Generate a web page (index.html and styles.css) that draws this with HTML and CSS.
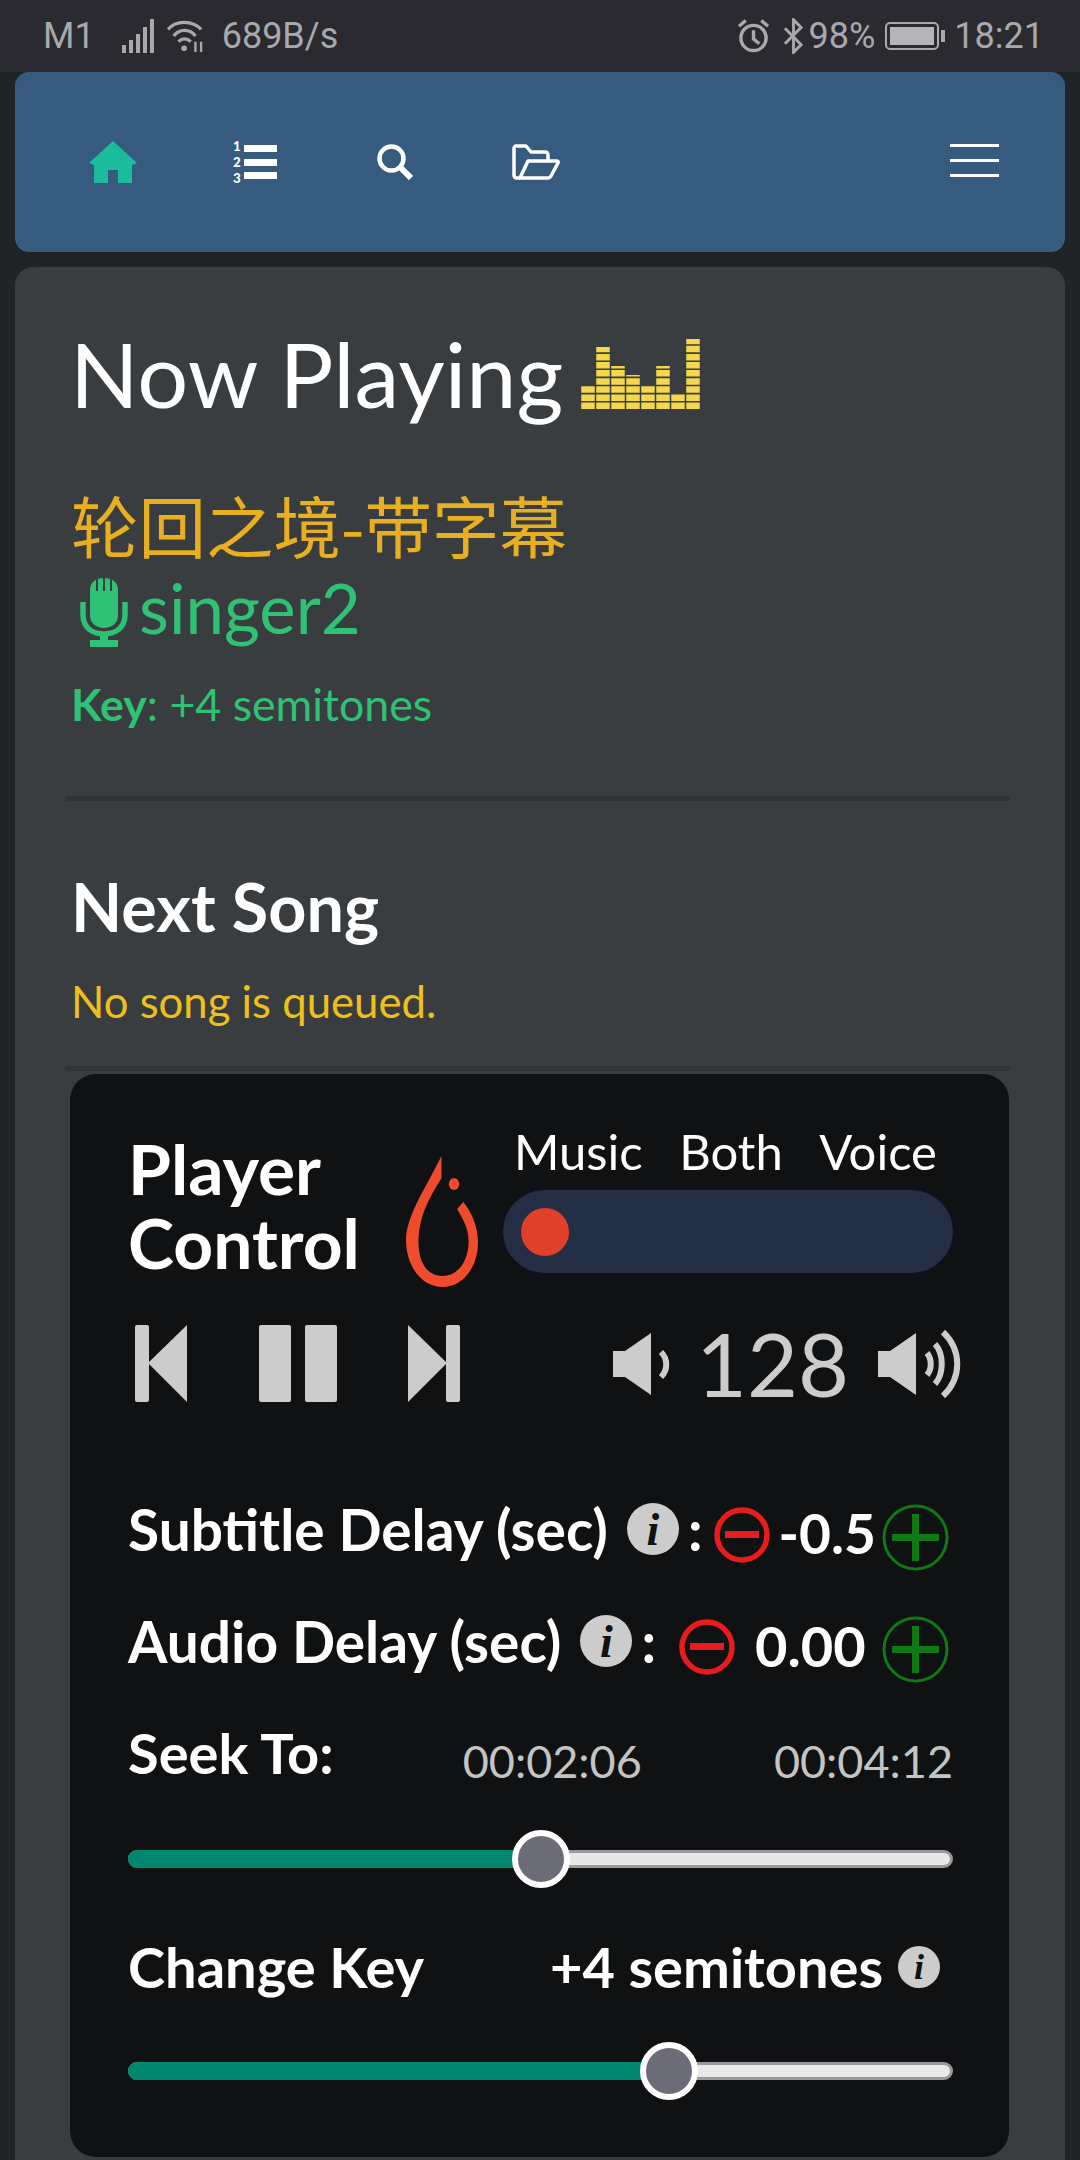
FILE: index.html
```html
<!DOCTYPE html>
<html lang="zh">
<head>
  <meta charset="UTF-8">
  <meta name="viewport" content="width=device-width, initial-scale=1.0">
  <title>Now Playing</title>
  <link rel="stylesheet" href="styles.css">
</head>
<body>
  <div class="statusbar">
    <div class="status-group">
      <span class="carrier">M1</span>
      <svg class="signal" width="35" height="34" viewBox="0 0 35 34" fill="#a9a8ad">
        <rect x="0" y="26" width="4" height="8"/><rect x="7" y="21" width="4" height="13"/><rect x="14" y="15" width="4" height="19"/><rect x="21" y="8" width="4" height="26"/><rect x="28" y="0" width="4" height="34"/>
      </svg>
      <svg class="wifi" width="42" height="34" viewBox="0 0 42 36" fill="none" stroke="#a9a8ad" stroke-width="3.5">
        <path d="M2 11C10 1 28 1 37 11"/><path d="M8 18C14 10 25 10 31 18"/><path d="M13 24C17 20 22 20 26 24"/>
        <circle cx="19" cy="31" r="3" fill="#a9a8ad" stroke="none"/>
        <path d="M31 24v11M37 24v11" stroke-width="2.5"/>
      </svg>
      <span class="netspeed">689B/s</span>
    </div>
    <div class="status-group">
      <svg class="alarm" width="33" height="36" viewBox="0 0 34 36" fill="none" stroke="#a9a8ad" stroke-width="3.5">
        <circle cx="17" cy="20" r="13"/><path d="M17 12v9l6 5"/><path d="M2 8l7-6M32 8l-7-6"/>
      </svg>
      <svg class="bluetooth" width="23" height="36" viewBox="0 0 24 36" fill="none" stroke="#a9a8ad" stroke-width="3">
        <path d="M3 10l17 17-8 8V1l8 8L3 26"/>
      </svg>
      <span class="battery-pct">98%</span>
      <div class="battery"><div class="battery-level"></div></div>
      <span class="clock">18:21</span>
    </div>
  </div>

  <nav class="navbar">
    <a class="nav-item">
      <svg width="48" height="42" viewBox="0 0 48 42" fill="#1abc9c"><path d="M24 0L48 22 43 24V42H29V29H19V42H5V24L0 22Z"/></svg>
    </a>
    <a class="nav-item">
      <svg class="list-icon" width="46" height="48" viewBox="0 0 46 48" fill="#fff">
        <rect x="13" y="7" width="33" height="7"/><rect x="13" y="21" width="33" height="7"/><rect x="13" y="34" width="33" height="7"/>
        <text class="list-num" x="2" y="13.2">1</text><text class="list-num" x="2" y="29.2">2</text><text class="list-num" x="2" y="45.2">3</text>
      </svg>
    </a>
    <a class="nav-item">
      <svg width="36" height="36" viewBox="0 0 36 36" fill="none" stroke="#fff"><circle cx="14.5" cy="14.5" r="12" stroke-width="4.5"/><path d="M23 23l11 11" stroke-width="6"/></svg>
    </a>
    <a class="nav-item">
      <svg width="48" height="36" viewBox="0 0 48 36" fill="none" stroke="#fff" stroke-width="3.5" stroke-linejoin="round">
        <path d="M8 34H5C3 34 2 33 2 31V4C2 3 3 2 4 2H14L19 8H33C35 8 36 9 36 11V16"/>
        <path d="M8 34L16 17H45C46 17 46.500 18 46 19L39 32C38 33.500 37 34 36 34Z"/>
      </svg>
    </a>
    <a class="nav-toggle"><span></span><span></span><span></span></a>
  </nav>

  <div class="jumbotron">
    <div class="now-playing">
      <h1>Now Playing</h1>
      <svg class="equalizer" width="119" height="70" viewBox="0 0 119 70" fill="none" stroke="#f4d84b" stroke-width="13.500" stroke-dasharray="6.5 1.6">
        <path d="M7 70V46"/><path d="M22 70V8"/><path d="M37 70V27"/><path d="M52 70V36"/><path d="M67 70V46"/><path d="M82 70V27"/><path d="M97 70V54"/><path d="M112 70V0"/>
      </svg>
    </div>
    <div class="song-title">轮回之境-带字幕</div>
    <div class="singer">
      <svg class="mic" width="48" height="69" viewBox="0 0 48 69">
        <path fill="#2fc274" d="M10 12C10 4 16 0 24 0C32 0 38 4 38 12V38C38 45 32 50 24 50C16 50 10 45 10 38Z"/>
        <path stroke="#393d40" stroke-width="2" d="M17 1V13M24 0V13M31 1V13"/>
        <path fill="none" stroke="#2fc274" stroke-width="5.500" d="M3 24V37C3 49 12 56 24 56C36 56 45 49 45 37V24"/>
        <path fill="#2fc274" d="M20 55H28V62H38V69H10V62H20Z"/>
      </svg>
      <span>singer2</span>
    </div>
    <div class="key-info"><strong>Key</strong>: +4 semitones</div>
    <hr class="divider first-divider">
    <h2>Next Song</h2>
    <div class="no-song">No song is queued.</div>
    <hr class="divider second-divider">

    <div class="player-card">
      <div class="player-head">
        <h3>Player<br>Control</h3>
        <svg class="flame" width="72" height="131" viewBox="0 0 69 131" preserveAspectRatio="none" fill="#ee4c2c">
          <path d="M34 0L34 22C22 42 13 60 12 82C11 106 20 120 35 120C50 120 60 105 60 85C60 72 54 62 49 53L55 46C64 58 69 72 69 86C69 112 54 131 35 131C15 131 0 110 0 84C0 60 20 30 34 0Z"/>
          <ellipse cx="46" cy="28" rx="5" ry="6"/>
        </svg>
        <div class="mix">
          <div class="mix-labels"><span>Music</span><span>Both</span><span>Voice</span></div>
          <div class="mix-switch"><div class="mix-dot"></div></div>
        </div>
      </div>

      <div class="transport">
        <svg width="52" height="77" viewBox="0 0 52 77" fill="#ccc"><rect width="14" height="77" rx="2"/><path d="M52 0V77L13 38Z"/></svg>
        <svg class="pause" width="78" height="77" viewBox="0 0 78 77" fill="#ccc"><rect width="32" height="77" rx="2"/><rect x="46" width="32" height="77" rx="2"/></svg>
        <svg width="52" height="77" viewBox="0 0 52 77" fill="#ccc"><path d="M0 0V77L39 38Z"/><rect x="38" width="14" height="77" rx="2"/></svg>
        <div class="volume">
          <svg width="60" height="62" viewBox="0 0 60 62" fill="#ccc">
            <path d="M0 18H12L38 0V62L12 44H0Z"/>
            <path d="M48 19C55 26 55 37 48 44" fill="none" stroke="#ccc" stroke-width="6"/>
          </svg>
          <span class="volume-value">128</span>
          <svg width="84" height="72" viewBox="0 0 84 72" fill="#ccc">
            <path d="M0 23H12L38 5V67L12 49H0Z"/>
            <g fill="none" stroke="#ccc" stroke-width="6">
              <path d="M49 25C54 31 54 41 49 47"/><path d="M57 16C66 26 66 46 57 56"/><path d="M65 4C84 22 84 50 65 68"/>
            </g>
          </svg>
        </div>
      </div>

      <div class="delay-row subtitle-delay">
        <span class="row-label">Subtitle Delay (sec)</span>
        <span class="info"><i>i</i></span>
        <span class="row-label colon">:</span>
        <svg class="btn-minus" width="56" height="56" viewBox="0 0 56 56"><circle cx="28" cy="28" r="25" fill="none" stroke="#e81c1c" stroke-width="5.500"/><rect x="11" y="24" width="34" height="7" fill="#e81c1c"/></svg>
        <span class="delay-value">-0.5</span>
        <svg class="btn-plus" width="67" height="67" viewBox="0 0 67 67"><circle cx="33.500" cy="33.500" r="31.500" fill="none" stroke="#0f7a14" stroke-width="3"/><path d="M10 33.500H57M33.500 10V57" stroke="#0f7a14" stroke-width="7"/></svg>
      </div>
      <div class="delay-row audio-delay">
        <span class="row-label">Audio Delay (sec)</span>
        <span class="info"><i>i</i></span>
        <span class="row-label colon">:</span>
        <svg class="btn-minus" width="56" height="56" viewBox="0 0 56 56"><circle cx="28" cy="28" r="25" fill="none" stroke="#e81c1c" stroke-width="5.500"/><rect x="11" y="24" width="34" height="7" fill="#e81c1c"/></svg>
        <span class="delay-value">0.00</span>
        <svg class="btn-plus" width="67" height="67" viewBox="0 0 67 67"><circle cx="33.500" cy="33.500" r="31.500" fill="none" stroke="#0f7a14" stroke-width="3"/><path d="M10 33.500H57M33.500 10V57" stroke="#0f7a14" stroke-width="7"/></svg>
      </div>

      <div class="seek-row">
        <span class="row-label short-label">Seek To:</span>
        <span class="time current">00:02:06</span>
        <span class="time total">00:04:12</span>
      </div>
      <div class="slider seek-slider">
        <div class="slider-fill" style="width: 50%"></div>
        <div class="slider-thumb" style="left: 50%"></div>
      </div>

      <div class="key-row">
        <span class="row-label short-label">Change Key</span>
        <span class="key-value"><span class="row-label short-label">+4 semitones</span><span class="info small"><i>i</i></span></span>
      </div>
      <div class="slider key-slider">
        <div class="slider-fill" style="width: 65.7%"></div>
        <div class="slider-thumb" style="left: 65.7%"></div>
      </div>
    </div>
  </div>
</body>
</html>
```

FILE: styles.css
```css
html, body {
  margin: 0;
  padding: 0;
}
body {
  width: 1080px;
  height: 2160px;
  overflow: hidden;
  background-color: #202427;
  font-family: Lato, "Noto Sans CJK SC", sans-serif;
  color: #fff;
}
h1, h2, h3 {
  margin: 0;
}

/* phone status bar */
.statusbar {
  height: 72px;
  box-sizing: border-box;
  padding: 0 36px 0 43px;
  background-color: #2b2a31;
  display: flex;
  justify-content: space-between;
  align-items: center;
  font-family: Roboto, sans-serif;
  font-size: 36px;
  color: #a9a8ad;
}
.status-group {
  display: flex;
  align-items: center;
}
.signal {
  margin-left: 27px;
}
.wifi {
  margin-left: 8px;
}
.netspeed {
  margin-left: 15px;
}
.bluetooth {
  margin-left: 12px;
}
.battery-pct {
  margin-left: 4px;
}
.battery {
  width: 54px;
  height: 28px;
  margin-left: 10px;
  margin-right: 7px;
  padding: 3px;
  box-sizing: border-box;
  border: 2px solid #a9a8ad;
  border-radius: 5px;
  position: relative;
}
.battery::after {
  content: "";
  position: absolute;
  right: -8px;
  top: 6px;
  width: 4px;
  height: 12px;
  background-color: #a9a8ad;
}
.battery-level {
  height: 100%;
  background-color: #b5b4b8;
}
.clock {
  margin-left: 8px;
}

/* navbar */
.navbar {
  height: 180px;
  margin: 0 15px;
  padding-left: 27px;
  padding-right: 66px;
  background-color: #375a7f;
  border-radius: 14px;
  display: flex;
  align-items: center;
}
.nav-item {
  width: 141px;
  display: flex;
  justify-content: center;
}
.list-num {
  font-family: Lato, sans-serif;
  font-size: 13.3px;
  font-weight: 900;
}
.nav-toggle {
  width: 49px;
  margin-left: auto;
  margin-bottom: 4px;
  display: flex;
  flex-direction: column;
  gap: 12px;
}
.nav-toggle span {
  height: 3px;
  background-color: #fff;
}

/* main card */
.jumbotron {
  margin: 15px 15px 0;
  padding: 56px 56px 0 55px;
  height: 1893px;
  box-sizing: border-box;
  background-color: #393d40;
  border-radius: 18px 18px 0 0;
}
.now-playing {
  display: flex;
  align-items: flex-end;
  height: 100px;
}
.now-playing h1 {
  font-size: 90px;
  font-weight: 400;
  line-height: 100px;
}
.equalizer {
  margin-left: 18px;
  margin-bottom: 14px;
}
.song-title {
  margin-top: 60px;
  margin-left: 1px;
  font-family: "Noto Sans CJK SC", sans-serif;
  font-size: 67.5px;
  line-height: 82px;
  color: #e8b020;
}
.singer {
  display: flex;
  align-items: flex-end;
  margin-top: 4px;
  margin-left: 10px;
  height: 78px;
  font-size: 69px;
  line-height: 78px;
  color: #2fc274;
}
.mic {
  margin-right: 11px;
}
.key-info {
  margin-top: 29px;
  margin-left: 1px;
  font-size: 44.7px;
  line-height: 56px;
  color: #2fc274;
}
.divider {
  border: none;
  height: 5px;
  margin: 0 -1px 0 -5px;
  background-color: #303437;
}
.first-divider {
  margin-top: 64px;
}
h2 {
  margin-top: 67px;
  margin-left: 1px;
  font-size: 66.5px;
  font-weight: 700;
  line-height: 76px;
}
.no-song {
  margin-top: 29px;
  margin-left: 1px;
  font-size: 43.7px;
  line-height: 56px;
  color: #edc01c;
}
.second-divider {
  margin-top: 37px;
}

/* player card */
.player-card {
  margin: 3px 0 0;
  height: 1083px;
  box-sizing: border-box;
  padding: 0 56px 0 58px;
  background-color: #101112;
  border-radius: 26px;
}
.player-head {
  display: flex;
  height: 251px;
  align-items: flex-start;
}
.player-head h3 {
  width: 278px;
  margin-top: 57px;
  font-size: 69.5px;
  font-weight: 700;
  line-height: 74px;
}
.flame {
  margin-top: 82px;
}
.mix {
  width: 450px;
  margin-left: 25px;
  margin-top: 47px;
}
.mix-labels {
  display: flex;
  padding-left: 11px;
  padding-right: 16px;
  justify-content: space-between;
  font-size: 49px;
  line-height: 60px;
}
.mix-switch {
  margin-top: 9px;
  height: 83px;
  background-color: #232e44;
  border-radius: 42px;
  display: flex;
  align-items: center;
  padding-left: 18px;
}
.mix-dot {
  width: 48px;
  height: 48px;
  border-radius: 50%;
  background-color: #e0402a;
}

.transport {
  display: flex;
  align-items: center;
  height: 77px;
  padding-left: 7px;
}
.transport svg {
  display: block;
}
.pause {
  margin: 0 71px 0 72px;
}
.volume {
  margin-left: auto;
  margin-right: -9px;
  display: flex;
  align-items: center;
}
.volume-value {
  margin: 0 29px 0 23px;
  font-size: 88px;
  font-weight: 400;
  line-height: 77px;
  color: #ccc;
}

.delay-row {
  display: flex;
  align-items: center;
  height: 70px;
  padding-right: 4px;
}
.subtitle-delay {
  margin-top: 92px;
}
.audio-delay {
  margin-top: 42px;
}
.row-label {
  font-size: 56.8px;
  font-weight: 700;
  line-height: 70px;
  white-space: nowrap;
}
.short-label {
  font-size: 56px;
}
.info {
  width: 52px;
  height: 52px;
  margin-left: 19px;
  flex-shrink: 0;
  border-radius: 50%;
  background-color: #ccc;
  color: #101112;
  display: flex;
  align-items: center;
  justify-content: center;
  font-family: "Liberation Serif", serif;
  font-size: 46px;
  font-weight: 700;
}
.info.small {
  width: 42px;
  height: 42px;
  margin-left: 15px;
  font-size: 36px;
}
.colon {
  margin-left: 9px;
}
.btn-minus {
  margin-left: 11px;
  margin-top: 11px;
}
.audio-delay .btn-minus {
  margin-left: 23px;
}
.delay-value {
  margin-left: 9px;
  margin-top: 8px;
  font-size: 55px;
  font-weight: 700;
}
.audio-delay .delay-value {
  margin-left: 20px;
  font-size: 56px;
}
.btn-plus {
  margin-left: auto;
  margin-top: 16px;
}

.seek-row {
  display: flex;
  align-items: center;
  margin-top: 42px;
  height: 70px;
}
.time {
  margin-top: 16px;
  font-size: 45px;
  font-weight: 400;
  color: #c4c4c4;
}
.current {
  margin-left: 129px;
}
.total {
  margin-left: auto;
}

.slider {
  position: relative;
  height: 18px;
  box-sizing: border-box;
  background-color: #e8e8e8;
  border: 3px solid #9a9a9e;
  border-radius: 9px;
}
.seek-slider {
  margin-top: 62px;
}
.key-slider {
  margin-top: 60px;
}
.slider-fill {
  position: absolute;
  left: -3px;
  top: -3px;
  height: 18px;
  background-color: #00876f;
  border-radius: 9px 0 0 9px;
}
.slider-thumb {
  position: absolute;
  top: 50%;
  width: 58px;
  height: 58px;
  box-sizing: border-box;
  margin-left: -29px;
  margin-top: -29px;
  border: 6px solid #fff;
  border-radius: 50%;
  background-color: #6c6c78;
}
.key-row {
  display: flex;
  align-items: center;
  justify-content: space-between;
  margin-top: 64px;
  height: 70px;
}
.key-value {
  display: flex;
  align-items: center;
  padding-right: 13px;
}
```
